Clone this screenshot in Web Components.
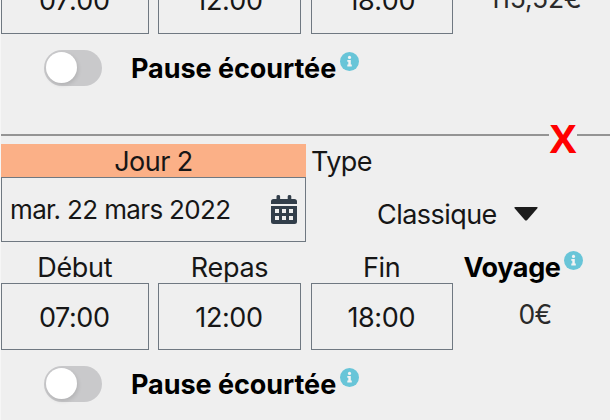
<!DOCTYPE html>
<html lang="fr">
<head>
<meta charset="utf-8">
<title>Planning</title>
<style>
  html, body { margin: 0; height: 420px; overflow: hidden; background: #efefef; }
  body {
    box-sizing: border-box;
    border-left: 1px solid #f6f6f6;
    font-family: Inter, "Liberation Sans", sans-serif;
    font-size: 27px;
    line-height: 33px;
    color: #161616;
  }
  .list { margin-top: -33px; }
  .list > :first-child { --time-line: 66px; --cost-spacing: -.2px; }
  .list > :last-child { height: 53px; }
</style>
</head>
<body>
<div class="list">
  <time-row>
    <time-field>07:00</time-field>
    <time-field>12:00</time-field>
    <time-field>18:00</time-field>
    <travel-cost>115,52€</travel-cost>
  </time-row>
  <pause-toggle>Pause écourtée</pause-toggle>
  <day-separator>X</day-separator>
  <day-head>
    <span slot="title">Jour 2</span>
    <span slot="date">mar. 22 mars 2022</span>
    <span slot="label">Type</span>
    <span slot="type">Classique</span>
  </day-head>
  <time-row>
    <time-field label="Début">07:00</time-field>
    <time-field label="Repas">12:00</time-field>
    <time-field label="Fin">18:00</time-field>
    <travel-cost label="Voyage">0€</travel-cost>
  </time-row>
  <pause-toggle>Pause écourtée</pause-toggle>
</div>

<script>
'use strict'

class BaseElement extends HTMLElement {
  constructor() {
    super();
    this.attachShadow({mode: 'open'});
  }
  connectedCallback() {
    this.shadowRoot.innerHTML = this.render();
  }
}

// round "i" badge
class InfoIcon extends BaseElement {
  render() {
    return `
      <style>
        :host { display: block; width: 19px; height: 19px; flex: none; }
        svg { display: block; }
      </style>
      <svg width="19" height="19" viewBox="0 0 19 19">
        <circle cx="9.5" cy="9.5" r="9.5" fill="#68c5d8"/>
        <circle cx="9.5" cy="5.4" r="1.6" fill="#f3f3f3"/>
        <path d="M7.3 8h3.5v4.6h1v1.8H7.3v-1.8h1V9.8h-1z" fill="#f3f3f3"/>
      </svg>`;
  }
}

class TimeRow extends BaseElement {
  render() {
    return `
      <style>
        :host {
          display: grid;
          grid-template-columns: 147.5px 143px 142.5px 1fr;
          column-gap: 9.5px;
        }
      </style>
      <slot></slot>`;
  }
}

class TimeField extends BaseElement {
  render() {
    const label = this.getAttribute('label');
    return `
      <style>
        :host { display: block; text-align: center; }
        .label { height: 32px; padding-top: 9px; letter-spacing: -.3px; }
        .box {
          box-sizing: border-box;
          height: 67px;
          border: 1px solid #6f7881;
          line-height: var(--time-line, 68px);
          letter-spacing: -.4px;
          padding-right: 1px;
        }
      </style>
      ${label ? `<div class="label">${label}</div>` : ''}
      <div class="box"><slot></slot></div>`;
  }
}

class TravelCost extends BaseElement {
  render() {
    const label = this.getAttribute('label');
    return `
      <style>
        :host { display: block; }
        .label { display: flex; height: 32px; padding: 9px 0 0 1px; font-weight: 700; color: #000; letter-spacing: -.4px; }
        info-icon { margin: 0 0 0 3.5px; }
        .cost {
          width: 145px;
          text-align: center;
          line-height: 62px;
          font-size: 26.5px;
          color: #2a2a2a;
          letter-spacing: var(--cost-spacing, -.8px);
        }
      </style>
      ${label ? `<div class="label">${label}<info-icon></info-icon></div>` : ''}
      <div class="cost"><slot></slot></div>`;
  }
}

class PauseToggle extends BaseElement {
  render() {
    return `
      <style>
        :host { display: flex; box-sizing: border-box; height: 100px; padding: 16px 0 0 43px; }
        .track {
          box-sizing: border-box;
          width: 58px;
          height: 35.5px;
          padding: 2px;
          border-radius: 18px;
          background: #c9c9cb;
        }
        .knob {
          width: 31px;
          height: 31px;
          border-radius: 50%;
          background: #fff;
          box-shadow: 1px 2px 4px rgba(0, 0, 0, .12);
        }
        .text { margin: 2px 4px 0 29px; font-weight: 700; color: #000; letter-spacing: -.05px; white-space: nowrap; }
        info-icon { margin-top: 1.5px; }
      </style>
      <div class="track"><div class="knob"></div></div>
      <div class="text"><slot></slot></div>
      <info-icon></info-icon>`;
  }
}

// rule between two days, broken by the delete cross
class DaySeparator extends BaseElement {
  render() {
    return `
      <style>
        :host { display: flex; height: 9.5px; }
        i { height: 1.5px; background: #949494; flex: 1; }
        i:last-child { flex: 0 0 33px; }
        b {
          width: 28px;
          text-align: center;
          font: 700 40px/40px "Open Sans", "Liberation Sans", sans-serif;
          color: #f00;
          height: 0;
          margin-top: -16.5px;
        }
      </style>
      <i></i><b><slot></slot></b><i></i>`;
  }
}

class DayHead extends BaseElement {
  render() {
    return `
      <style>
        :host {
          display: grid;
          grid-template-columns: 305px 1fr;
          grid-template-rows: 33.5px 65px;
          letter-spacing: -.55px;
        }
        .title { background: #fbb087; text-align: center; line-height: 35px; }
        .label { padding-left: 5px; line-height: 35px; }
        .date {
          display: flex;
          align-items: center;
          justify-content: space-between;
          box-sizing: border-box;
          padding: 0 8px 0 8px;
          border: 1px solid #6f7881;
          font-size: 26px;
          letter-spacing: -.65px;
        }
        .type { display: flex; align-items: center; gap: 17px; padding: 9px 0 0 71px; }
      </style>
      <div class="title"><slot name="title"></slot></div>
      <div class="label"><slot name="label"></slot></div>
      <div class="date">
        <slot name="date"></slot>
        <svg width="26" height="30" viewBox="0 0 26 30" fill="#323e4a">
          <path d="M0 9V6.500Q0 4 2.500 4H5.500V1.200Q5.500 0 7.300 0T9.100 1.200V4H16.700V1.200Q16.700 0 18.500 0T20.300 1.200V4H23.300Q26 4 26 6.500V9Z"/>
          <path fill-rule="evenodd" d="M0 11H26V26.500Q26 29 23.500 29H2.500Q0 29 0 26.500ZM4 14V18H8V14ZM11 14V18H15V14ZM18 14V18H22V14ZM4 21V25H8V21ZM11 21V25H15V21ZM18 21V25H22V21Z"/>
        </svg>
      </div>
      <div class="type">
        <slot name="type"></slot>
        <svg width="24" height="14" viewBox="0 0 24 14" fill="#1c1c1c">
          <path d="M1.500 0H22.500Q24.500 0 23.200 1.600L13.200 13Q12 14.200 10.800 13L.8 1.600Q-.5 0 1.500 0Z"/>
        </svg>
      </div>`;
  }
}

customElements.define('info-icon', InfoIcon);
customElements.define('time-row', TimeRow);
customElements.define('time-field', TimeField);
customElements.define('travel-cost', TravelCost);
customElements.define('pause-toggle', PauseToggle);
customElements.define('day-separator', DaySeparator);
customElements.define('day-head', DayHead);
</script>
</body>
</html>
